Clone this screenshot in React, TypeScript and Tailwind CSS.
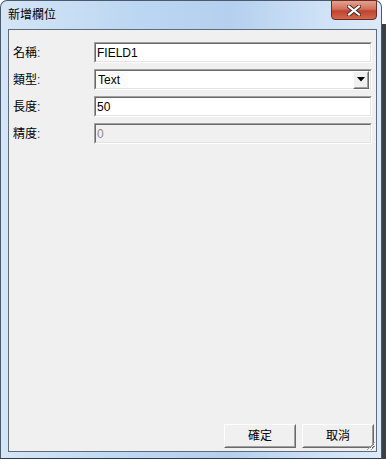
import React from "react";

const FONT = "font-['Liberation_Sans','Noto_Sans_CJK_TC',sans-serif]";

/** Win classic sunken edge: dark top/left, light bottom/right. */
function Sunken({ children, disabled }: { children: React.ReactNode; disabled?: boolean }) {
  return (
    <div className="h-[21px] border-t border-l border-t-[#a0a0a0] border-l-[#a0a0a0] border-b border-r border-b-white border-r-white">
      <div
        className={`flex h-full items-center border-t border-l border-t-[#696969] border-l-[#696969] border-b border-r border-b-[#e3e3e3] border-r-[#e3e3e3] ${
          disabled ? "bg-[#f0f0f0] text-[#8a8a8a]" : "bg-white text-black"
        }`}
      >
        {children}
      </div>
    </div>
  );
}

function Raised({ children, className }: { children?: React.ReactNode; className?: string }) {
  return (
    <div
      className={`border-t border-l border-t-white border-l-white border-b border-r border-b-[#696969] border-r-[#696969] ${className ?? ""}`}
    >
      <div className="flex h-full w-full items-center justify-center border-t border-l border-t-[#f0f0f0] border-l-[#f0f0f0] border-b border-r border-b-[#a0a0a0] border-r-[#a0a0a0] bg-[#f0f0f0]">
        {children}
      </div>
    </div>
  );
}

function Label({ text }: { text: string }) {
  return (
    <div className="flex h-[21px] items-center text-[12px] text-black">
      {text}
      <span className="text-[#2a3a8a]">:</span>
    </div>
  );
}

export default function App() {
  return (
    <div className={`flex h-[459px] w-[386px] bg-white ${FONT}`}>
      <div className="flex h-[459px] w-[382px] flex-col rounded-t-[7px] border border-[#4a5a6c] border-b-[#2f3a46] bg-[linear-gradient(90deg,#d4e5f6_0%,#bcd7f2_35%,#b4d0ee_60%,#cfe2f6_85%,#dceaf8_100%)]">
        {/* title bar */}
        <div className="flex h-[28px] shrink-0 items-start justify-between">
          <div className="pl-[7px] pt-[7px] text-[12px] leading-[14px] text-black">新增欄位</div>
          <div className="mr-[4px] mt-[-1px] flex h-[20px] w-[46px] items-center justify-center rounded-b-[4px] border border-[#6b2a22] bg-[linear-gradient(180deg,#e3a291_0%,#d2705c_45%,#c0432e_55%,#cf6a4f_100%)]">
            <svg width="14" height="11" viewBox="0 0 14 11">
              <path
                d="M2 1.5 L12 9.5 M12 1.5 L2 9.5"
                stroke="#3b2622"
                strokeWidth="4"
                strokeLinecap="square"
              />
              <path
                d="M2 1.5 L12 9.5 M12 1.5 L2 9.5"
                stroke="#ffffff"
                strokeWidth="2.2"
                strokeLinecap="square"
              />
            </svg>
          </div>
        </div>

        {/* client area */}
        <div className="relative ml-[7px] mr-[4px] flex flex-1 flex-col border border-[#5d6b7a] bg-[#f0f0f0]">
          <div className="grid grid-cols-[81px_1fr] gap-y-[6px] pl-[4px] pr-[4px] pt-[12px]">
            <Label text="名稱" />
            <Sunken>
              <span className="pl-[1px] text-[12px]">FIELD1</span>
            </Sunken>

            <Label text="類型" />
            <Sunken>
              <span className="flex-1 pl-[2px] text-[12px]">Text</span>
              <Raised className="mr-[1px] h-[18px] w-[16px]">
                <svg width="8" height="5" viewBox="0 0 8 5">
                  <path d="M0 0 H8 L4 4.5 Z" fill="#000" />
                </svg>
              </Raised>
            </Sunken>

            <Label text="長度" />
            <Sunken>
              <span className="pl-[1px] text-[12px]">50</span>
            </Sunken>

            <Label text="精度" />
            <Sunken disabled>
              <span className="pl-[1px] text-[12px]">0</span>
            </Sunken>
          </div>

          <div className="flex-1" />

          <div className="flex justify-end gap-[6px] pb-[3px] pr-[2px]">
            <Raised className="h-[24px] w-[72px]">
              <span className="text-[12px] text-black">確定</span>
            </Raised>
            <Raised className="h-[24px] w-[72px]">
              <span className="text-[12px] text-black">取消</span>
            </Raised>
          </div>

          {/* size grip */}
          <svg className="absolute bottom-0 right-0" width="12" height="12" viewBox="0 0 12 12">
            <path d="M11 3 L3 11 M11 7 L7 11" stroke="#a0a0a0" strokeWidth="1" />
            <path d="M12 4 L4 12 M12 8 L8 12" stroke="#ffffff" strokeWidth="1" />
          </svg>
        </div>

        {/* bottom frame */}
        <div className="h-[6px] shrink-0" />
      </div>
      <div className="flex w-[4px] flex-col">
        <div className="h-[24px] bg-white" />
        <div className="flex-1 bg-[#3c3f44]" />
      </div>
    </div>
  );
}
